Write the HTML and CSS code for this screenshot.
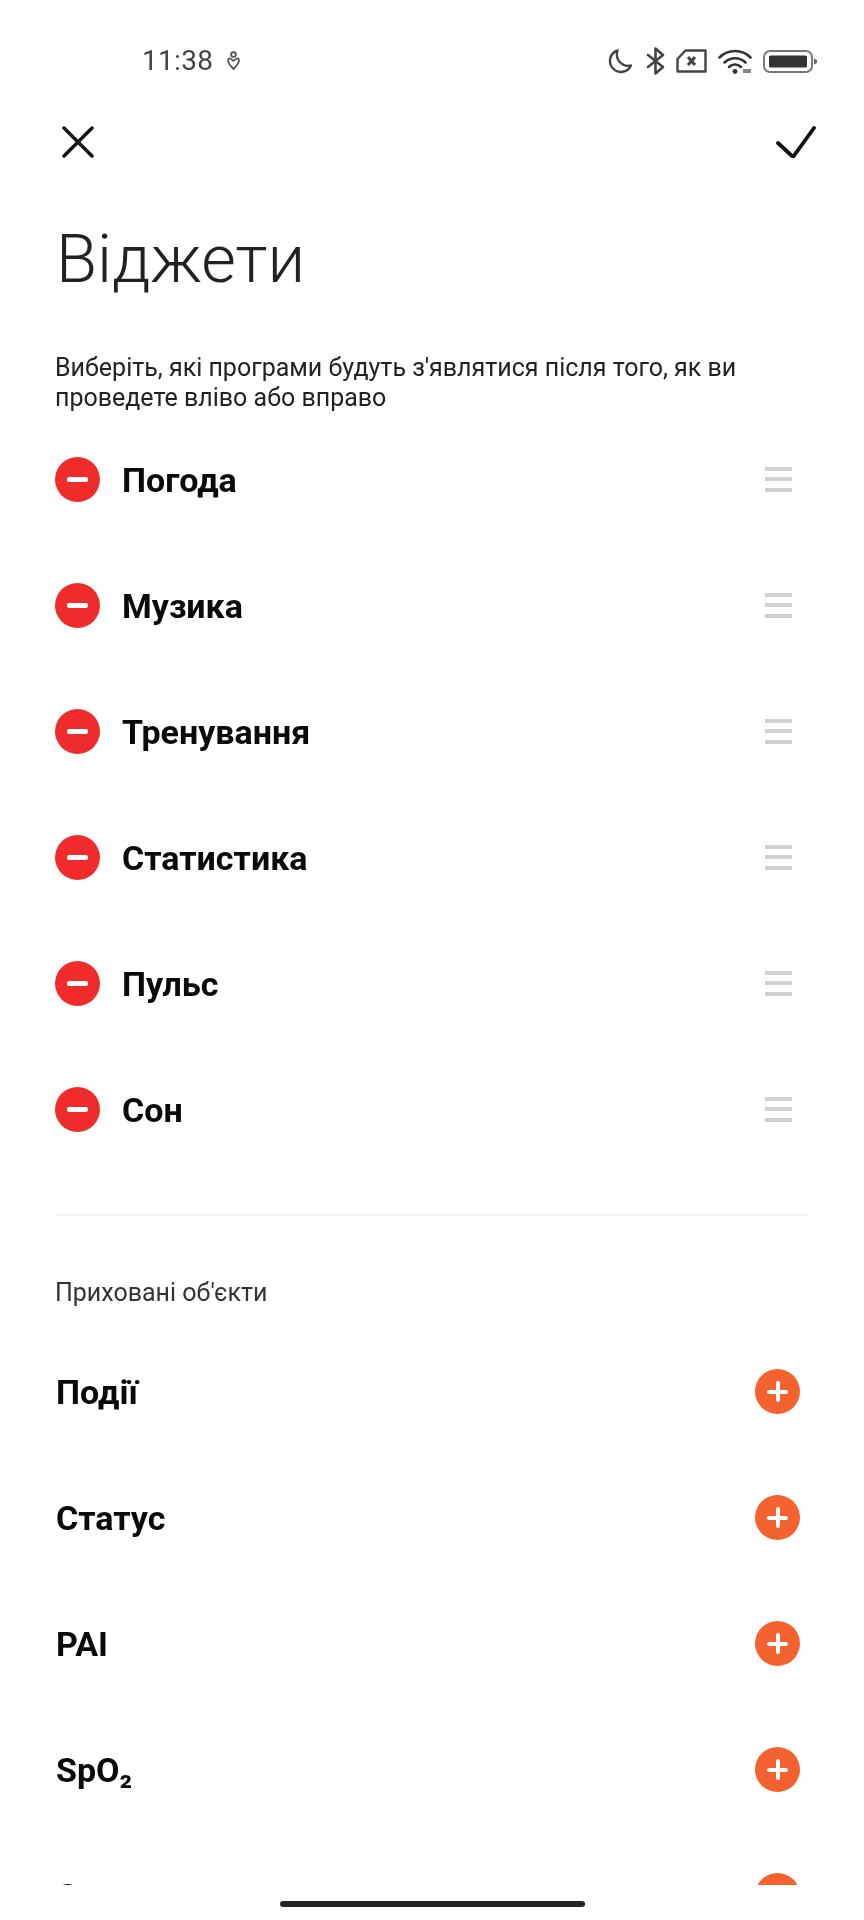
FILE: index.html
```html
<!DOCTYPE html>
<html lang="uk">
<head>
<meta charset="utf-8">
<title>Віджети</title>
<link rel="stylesheet" href="styles.css">
</head>
<body>
<div class="phone">
  <div class="status">
    <div class="status-left">
      <span class="time">11:38</span>
      <svg class="ic-alarm" viewBox="0 0 13 21"><circle cx="6.5" cy="3.5" r="2.4" fill="none" stroke="#555" stroke-width="1.8"/><path d="M1 9.5c0-2 2-2.6 3-1.6l2.5 2 2.5-2c1-1 3-.4 3 1.6 0 3-3.500 6.500-5.500 8.500C4.500 16 1 12.500 1 9.500z" fill="none" stroke="#555" stroke-width="1.800"/></svg>
    </div>
    <div class="status-right">
      <svg class="ic-moon" viewBox="0 0 26 26"><path d="M10.500 2.500A11 11 0 1 0 24 17.500 A11.500 11.500 0 0 1 10.500 2.500z" fill="none" stroke="#444" stroke-width="2.400" stroke-linejoin="round"/></svg>
      <svg class="ic-bt" viewBox="0 0 19 28"><path d="M2 8l15 12-7.500 6.500V1.500L17 8 2 20" fill="none" stroke="#444" stroke-width="2.600" stroke-linejoin="round" stroke-linecap="round"/></svg>
      <svg class="ic-sim" viewBox="0 0 31 24"><path d="M9.500 1.500H29.500V22.500H1.500V10z" fill="none" stroke="#444" stroke-width="2.400" stroke-linejoin="round"/><path d="M12 8l7 8M19 8l-7 8" stroke="#444" stroke-width="3" fill="none"/></svg>
      <svg class="ic-wifi" viewBox="0 0 34 26"><path d="M1.500 9.500a22 22 0 0 1 31 0M6.500 14.500a15 15 0 0 1 21 0M11 19a8.500 8.500 0 0 1 12 0" fill="none" stroke="#333" stroke-width="2.500" stroke-linecap="round"/><circle cx="17" cy="23.500" r="2.400" fill="#333"/><rect x="25" y="21" width="8" height="4" fill="#888"/></svg>
      <svg class="ic-batt" viewBox="0 0 54 23"><rect x="1" y="1" width="48" height="21" rx="6" fill="none" stroke="#777" stroke-width="2"/><rect x="6" y="5.500" width="38" height="12" rx="1.500" fill="#333"/><path d="M51 8.500l3 1.500v3l-3 1.500z" fill="#666"/></svg>
    </div>
  </div>

  <div class="nav">
    <svg class="ic-close" viewBox="0 0 32 32"><path d="M2 2l28 28M30 2L2 30" stroke="#111" stroke-width="3.400" stroke-linecap="round" fill="none"/></svg>
    <svg class="ic-check" viewBox="0 0 40 32"><path d="M2 17l15 14L38 2" stroke="#111" stroke-width="3.800" stroke-linecap="round" stroke-linejoin="round" fill="none"/></svg>
  </div>

  <h1 class="title">Віджети</h1>
  <p class="desc">Виберіть, які програми будуть з'являтися після того, як ви проведете вліво або вправо</p>

  <ul class="list active">
    <li class="row"><span class="btn remove"></span><span class="label">Погода</span><span class="handle"></span></li>
    <li class="row"><span class="btn remove"></span><span class="label">Музика</span><span class="handle"></span></li>
    <li class="row"><span class="btn remove"></span><span class="label">Тренування</span><span class="handle"></span></li>
    <li class="row"><span class="btn remove"></span><span class="label">Статистика</span><span class="handle"></span></li>
    <li class="row"><span class="btn remove"></span><span class="label">Пульс</span><span class="handle"></span></li>
    <li class="row"><span class="btn remove"></span><span class="label">Сон</span><span class="handle"></span></li>
  </ul>

  <div class="divider"></div>
  <div class="section">Приховані об'єкти</div>

  <div class="scroll">
    <ul class="list hidden-items">
      <li class="row"><span class="label">Події</span><span class="btn add"></span></li>
      <li class="row"><span class="label">Статус</span><span class="btn add"></span></li>
      <li class="row"><span class="label">PAI</span><span class="btn add"></span></li>
      <li class="row"><span class="label">SpO₂</span><span class="btn add"></span></li>
      <li class="row"><span class="label">Стрес</span><span class="btn add"></span></li>
    </ul>
  </div>
  <div class="home-area"><div class="home-bar"></div></div>
</div>
</body>
</html>
```
FILE: styles.css
```css
* { box-sizing: border-box; }
html, body { margin: 0; padding: 0; background: #fff; }
body { font-family: Roboto, "Noto Sans", sans-serif; color: #000; }
.phone { width: 864px; height: 1920px; overflow: hidden; display: flex; flex-direction: column; filter: blur(0.4px); }

.status { height: 74px; padding: 47px 47px 0 142px; display: flex; justify-content: space-between; align-items: flex-start; }
.status-left { display: flex; align-items: center; gap: 14px; height: 28px; }
.time { font-size: 28px; color: #444; letter-spacing: 0.3px; line-height: 28px; }
.ic-alarm { width: 13px; height: 21px; }
.status-right { display: flex; align-items: center; height: 28px; }
.status-right svg { display: block; flex: none; }
.ic-moon { width: 26px; height: 26px; margin-right: 13px; }
.ic-bt { width: 19px; height: 28px; margin-right: 11px; }
.ic-sim { width: 31px; height: 24px; margin-right: 11px; }
.ic-wifi { width: 34px; height: 26px; margin-right: 11px; }
.ic-batt { width: 54px; height: 23px; }

.nav { height: 52px; margin-top: 52px; padding: 0 48px 0 62px; display: flex; justify-content: space-between; align-items: flex-start; }
.ic-close { width: 32px; height: 32px; display: block; }
.ic-check { width: 40px; height: 32px; display: block; }

.title { margin: 42px 0 0 56px; font-size: 67px; font-weight: 285; line-height: 78px; color: #222; letter-spacing: 0; }
.desc { margin: 55px 50px 0 55px; font-size: 25px; line-height: 30px; color: #222; }

.list { list-style: none; margin: 0; padding: 0; }
.row { height: 126px; display: flex; align-items: center; padding: 0 55px; }
.active { margin-top: 3px; }
.active .row { padding-right: 72px; }
.hidden-items .row { padding-left: 56px; }
.label { flex: 1; font-size: 34px; font-weight: 700; color: #0a0a0a; padding-top: 2px; }
.active .label { margin-left: 22px; }
.btn { width: 45px; height: 45px; border-radius: 50%; flex: none; position: relative; }
.btn::before, .btn::after { content: ""; position: absolute; background: #fff; border-radius: 2px; }
.remove { background: #f02b2b; }
.remove::before { left: 12px; right: 12px; top: 20px; height: 5px; }
.remove::after { display: none; }
.add { background: #f4622f; margin-right: 9px; }
.add::before { left: 12px; right: 12px; top: 21px; height: 4px; }
.add::after { top: 12px; bottom: 12px; left: 21px; width: 4px; }
.handle { width: 27px; height: 25px; flex: none; display: flex; background: linear-gradient(#d0d0d0, #d0d0d0) 0 0 / 100% 4px no-repeat, linear-gradient(#d0d0d0, #d0d0d0) 0 10.5px / 100% 4px no-repeat, linear-gradient(#d0d0d0, #d0d0d0) 0 21px / 100% 4px no-repeat; }

.divider { height: 2px; margin: 42px 56px 0 55px; background: #f4f4f4; }
.section { margin-top: 64px; margin-left: 55px; font-size: 25px; line-height: 26px; color: #333; }

.scroll { height: 557px; overflow: hidden; margin-top: 22px; }
.home-area { flex: 1; display: flex; justify-content: center; padding-top: 16px; }
.home-bar { width: 305px; height: 6px; border-radius: 3px; background: #222; }
```
